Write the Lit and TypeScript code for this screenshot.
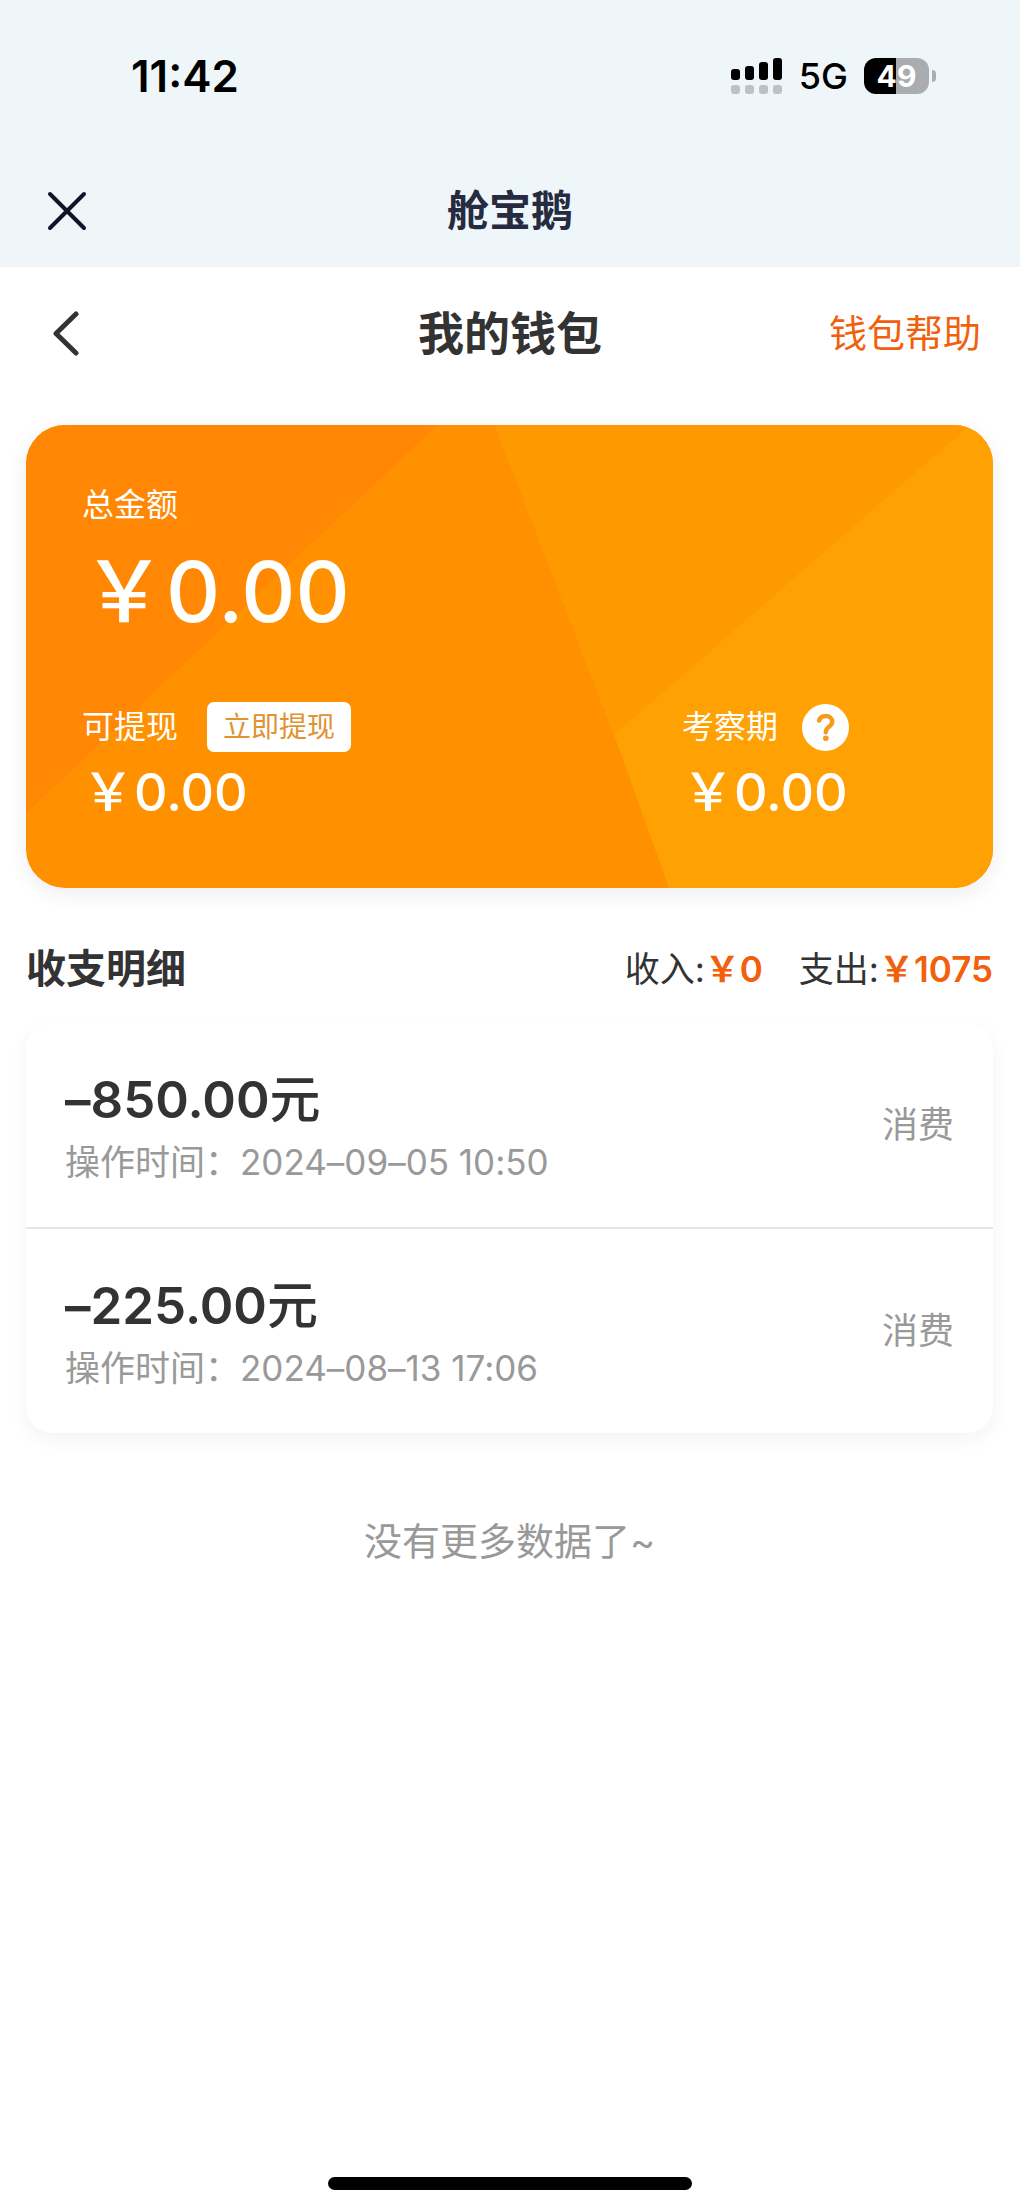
import { LitElement, html, css, svg } from "lit";
import { customElement, property } from "lit/decorators.js";

interface WalletRecord {
  amount: string;
  time: string;
  kind: string;
}

const RECORDS: WalletRecord[] = [
  { amount: "–850.00", time: "2024–09–05 10:50", kind: "消费" },
  { amount: "–225.00", time: "2024–08–13 17:06", kind: "消费" },
];

@customElement("status-bar")
class StatusBar extends LitElement {
  @property({ type: Number }) level = 49;

  static styles = css`
    :host {
      display: flex;
      align-items: center;
      justify-content: space-between;
      height: 152px;
      padding: 0 84px 0 131px;
      box-sizing: border-box;
      color: #000;
    }
    .time {
      font-size: 44px;
      line-height: 52px;
      font-weight: 600;
    }
    .right {
      display: flex;
      align-items: center;
      gap: 16px;
    }
    .signal {
      display: block;
      width: 52px;
      height: 36px;
    }
    .network {
      font-size: 36px;
      line-height: 40px;
      font-weight: 500;
    }
    .battery {
      display: flex;
      align-items: center;
      gap: 3px;
    }
    .cell {
      width: 65px;
      height: 36px;
      border-radius: 12px;
      color: #fff;
      font-size: 30px;
      line-height: 36px;
      font-weight: 700;
      text-align: center;
    }
    .nub {
      width: 4px;
      height: 12px;
      border-radius: 0 4px 4px 0;
      background: #a9adaf;
    }
  `;

  render() {
    const bars = [11, 14, 18, 22];
    return html`
      <span class="time">11:42</span>
      <div class="right">
        <svg class="signal" viewBox="0 0 52 36" aria-hidden="true">
          ${bars.map(
            (h, i) => svg`
              <rect x=${i * 14} y=${22 - h} width="9" height=${h} rx="3" fill="#000"></rect>
              <rect x=${i * 14} y="27" width="9" height="9" rx="3" fill="#bcc1c3"></rect>`
          )}
        </svg>
        <span class="network">5G</span>
        <div class="battery">
          <div
            class="cell"
            style="background: linear-gradient(90deg, #000 ${this.level}%, #a9adaf ${this.level}%)"
          >${this.level}</div>
          <div class="nub"></div>
        </div>
      </div>
    `;
  }
}

@customElement("balance-card")
class BalanceCard extends LitElement {
  static styles = css`
    :host {
      display: block;
      position: relative;
      overflow: hidden;
      border-radius: 39px;
      padding: 58px 54px 63px 56px;
      background: #ff9000;
      box-shadow: 0 6px 20px rgba(40, 40, 90, 0.08);
      color: #fff;
    }
    .facets {
      position: absolute;
      inset: 0;
      width: 100%;
      height: 100%;
    }
    .content {
      position: relative;
    }
    .label {
      font-size: 32px;
      line-height: 44px;
    }
    .total {
      margin-top: 15px;
      font-size: 84px;
      line-height: 100px;
      font-weight: 500;
    }
    .columns {
      display: grid;
      grid-template-columns: 7fr 3fr;
      margin-top: 60px;
    }
    .head {
      display: flex;
      align-items: center;
      height: 50px;
      gap: 24px;
    }
    .value {
      margin-top: 9px;
      font-size: 52px;
      line-height: 64px;
      font-weight: 500;
    }
    .withdraw {
      margin: 0 0 0 5px;
      padding: 0 16px;
      height: 50px;
      border: 0;
      border-radius: 7px;
      background: #fff;
      color: #e0932f;
      font-family: inherit;
      font-size: 28px;
      line-height: 50px;
    }
    .help {
      display: block;
      margin: 0;
      padding: 0;
      border: 0;
      background: none;
      width: 47px;
      height: 47px;
    }
    .help svg {
      display: block;
    }
  `;

  render() {
    return html`
      <svg class="facets" viewBox="0 0 967 463" preserveAspectRatio="none" aria-hidden="true">
        <path d="M0 0H411L0 388Z" fill="#ff8703"></path>
        <path d="M469 0H967V463H643L588 310Z" fill="#ffa103"></path>
        <path d="M469 0H944L588 310Z" fill="#ff9900"></path>
      </svg>
      <div class="content">
        <div class="label">总金额</div>
        <div class="total">￥0.00</div>
        <div class="columns">
          <div>
            <div class="head">
              <span class="label">可提现</span>
              <button class="withdraw" type="button">立即提现</button>
            </div>
            <div class="value">￥0.00</div>
          </div>
          <div>
            <div class="head">
              <span class="label">考察期</span>
              <button class="help" type="button" aria-label="考察期">
                <svg width="47" height="47" viewBox="0 0 47 47" fill="none">
                  <circle cx="23.500" cy="23.500" r="23.500" fill="#fff"></circle>
                  <path
                    d="M17 16.500C18 13.500 20.500 12 23.700 12C27.500 12 30.200 14.300 30.200 17.600C30.200 20 29 21.300 27 22.700C24.800 24.200 23.800 25.300 23.800 28.200"
                    stroke="#f59b1c" stroke-width="4.400" stroke-linecap="round"></path>
                  <circle cx="23.800" cy="34.200" r="2.800" fill="#f59b1c"></circle>
                </svg>
              </button>
            </div>
            <div class="value">￥0.00</div>
          </div>
        </div>
      </div>
    `;
  }
}

@customElement("record-list")
class RecordList extends LitElement {
  @property({ attribute: false }) records: WalletRecord[] = [];

  static styles = css`
    :host {
      display: block;
      font-feature-settings: "calt" 0;
    }
    .list {
      margin: 0;
      padding: 0;
      list-style: none;
      border-radius: 26px;
      background: #fff;
      box-shadow: 0 6px 20px rgba(0, 0, 0, 0.05);
    }
    .row {
      display: flex;
      align-items: center;
      justify-content: space-between;
      padding: 40px 39px;
    }
    .row + .row {
      border-top: 2px solid #e6e6e6;
    }
    .amount {
      font-size: 51px;
      line-height: 74px;
      font-weight: 600;
      color: #333;
    }
    .unit {
      font-weight: 500;
    }
    .time,
    .kind {
      line-height: 50px;
      color: #999;
    }
    .time {
      font-size: 35px;
    }
    .kind {
      font-size: 36px;
    }
  `;

  render() {
    return html`
      <ul class="list">
        ${this.records.map(
          (r) => html`
            <li class="row">
              <div>
                <div class="amount">${r.amount}<span class="unit">元</span></div>
                <div class="time">操作时间：${r.time}</div>
              </div>
              <span class="kind">${r.kind}</span>
            </li>
          `
        )}
      </ul>
    `;
  }
}

@customElement("app-root")
class AppRoot extends LitElement {
  static styles = css`
    :host {
      display: flex;
      flex-direction: column;
      min-height: 100vh;
      background: #fff;
      color: #333;
      font-family: Inter, "Noto Sans CJK SC", sans-serif;
    }
    .top {
      background: #eef6f9;
      border-bottom: 2px solid #f1f3f8;
    }
    .bar {
      display: grid;
      grid-template-columns: 1fr auto 1fr;
      align-items: center;
      padding: 0 39px;
    }
    .app {
      height: 109px;
      padding-top: 4px;
    }
    .page {
      height: 132px;
    }
    .icon {
      display: block;
      justify-self: start;
      margin: 0;
      padding: 0 8px;
      border: 0;
      background: none;
    }
    .icon svg {
      display: block;
    }
    .app-name {
      font-size: 42px;
      line-height: 60px;
      font-weight: 700;
      color: #262b40;
    }
    .title {
      margin: 0;
      font-size: 46px;
      line-height: 64px;
      font-weight: 700;
    }
    .help-link {
      justify-self: end;
      font-size: 38px;
      line-height: 54px;
      color: #f1600d;
      text-decoration: none;
    }
    .main {
      padding: 26px 27px 0 26px;
    }
    .section {
      display: flex;
      align-items: center;
      justify-content: space-between;
      padding: 51px 0 24px;
    }
    .section-title {
      margin: 0;
      font-size: 40px;
      line-height: 60px;
      font-weight: 700;
    }
    .sums {
      display: flex;
      gap: 36px;
      font-size: 35px;
      line-height: 60px;
    }
    .sum {
      color: #f1600d;
      font-weight: 600;
    }
    .end {
      margin: 81px 0 0;
      text-align: center;
      font-size: 38px;
      line-height: 54px;
      color: #999;
    }
    .home {
      align-self: center;
      width: 36%;
      max-width: 364px;
      height: 13px;
      margin: auto 0 21px;
      border-radius: 7px;
      background: #000;
    }
  `;

  render() {
    return html`
      <header class="top">
        <status-bar></status-bar>
        <div class="bar app">
          <button class="icon" type="button" aria-label="关闭">
            <svg width="40" height="40" viewBox="0 0 40 40" fill="none">
              <path d="M3 3L37 37M37 3L3 37" stroke="#101428" stroke-width="4" stroke-linecap="round"></path>
            </svg>
          </button>
          <span class="app-name">舱宝鹅</span>
        </div>
      </header>
      <div class="bar page">
        <button class="icon" type="button" aria-label="返回">
          <svg width="36" height="46" viewBox="0 0 36 46" fill="none">
            <path d="M29 4L9 23.500L29 43" stroke="#333" stroke-width="5" stroke-linecap="round" stroke-linejoin="round"></path>
          </svg>
        </button>
        <h1 class="title">我的钱包</h1>
        <a class="help-link" href="#help">钱包帮助</a>
      </div>
      <main class="main">
        <balance-card></balance-card>
        <div class="section">
          <h2 class="section-title">收支明细</h2>
          <div class="sums">
            <span>收入:<span class="sum">￥0</span></span>
            <span>支出:<span class="sum">￥1075</span></span>
          </div>
        </div>
        <record-list .records=${RECORDS}></record-list>
        <p class="end">没有更多数据了~</p>
      </main>
      <div class="home"></div>
    `;
  }
}
